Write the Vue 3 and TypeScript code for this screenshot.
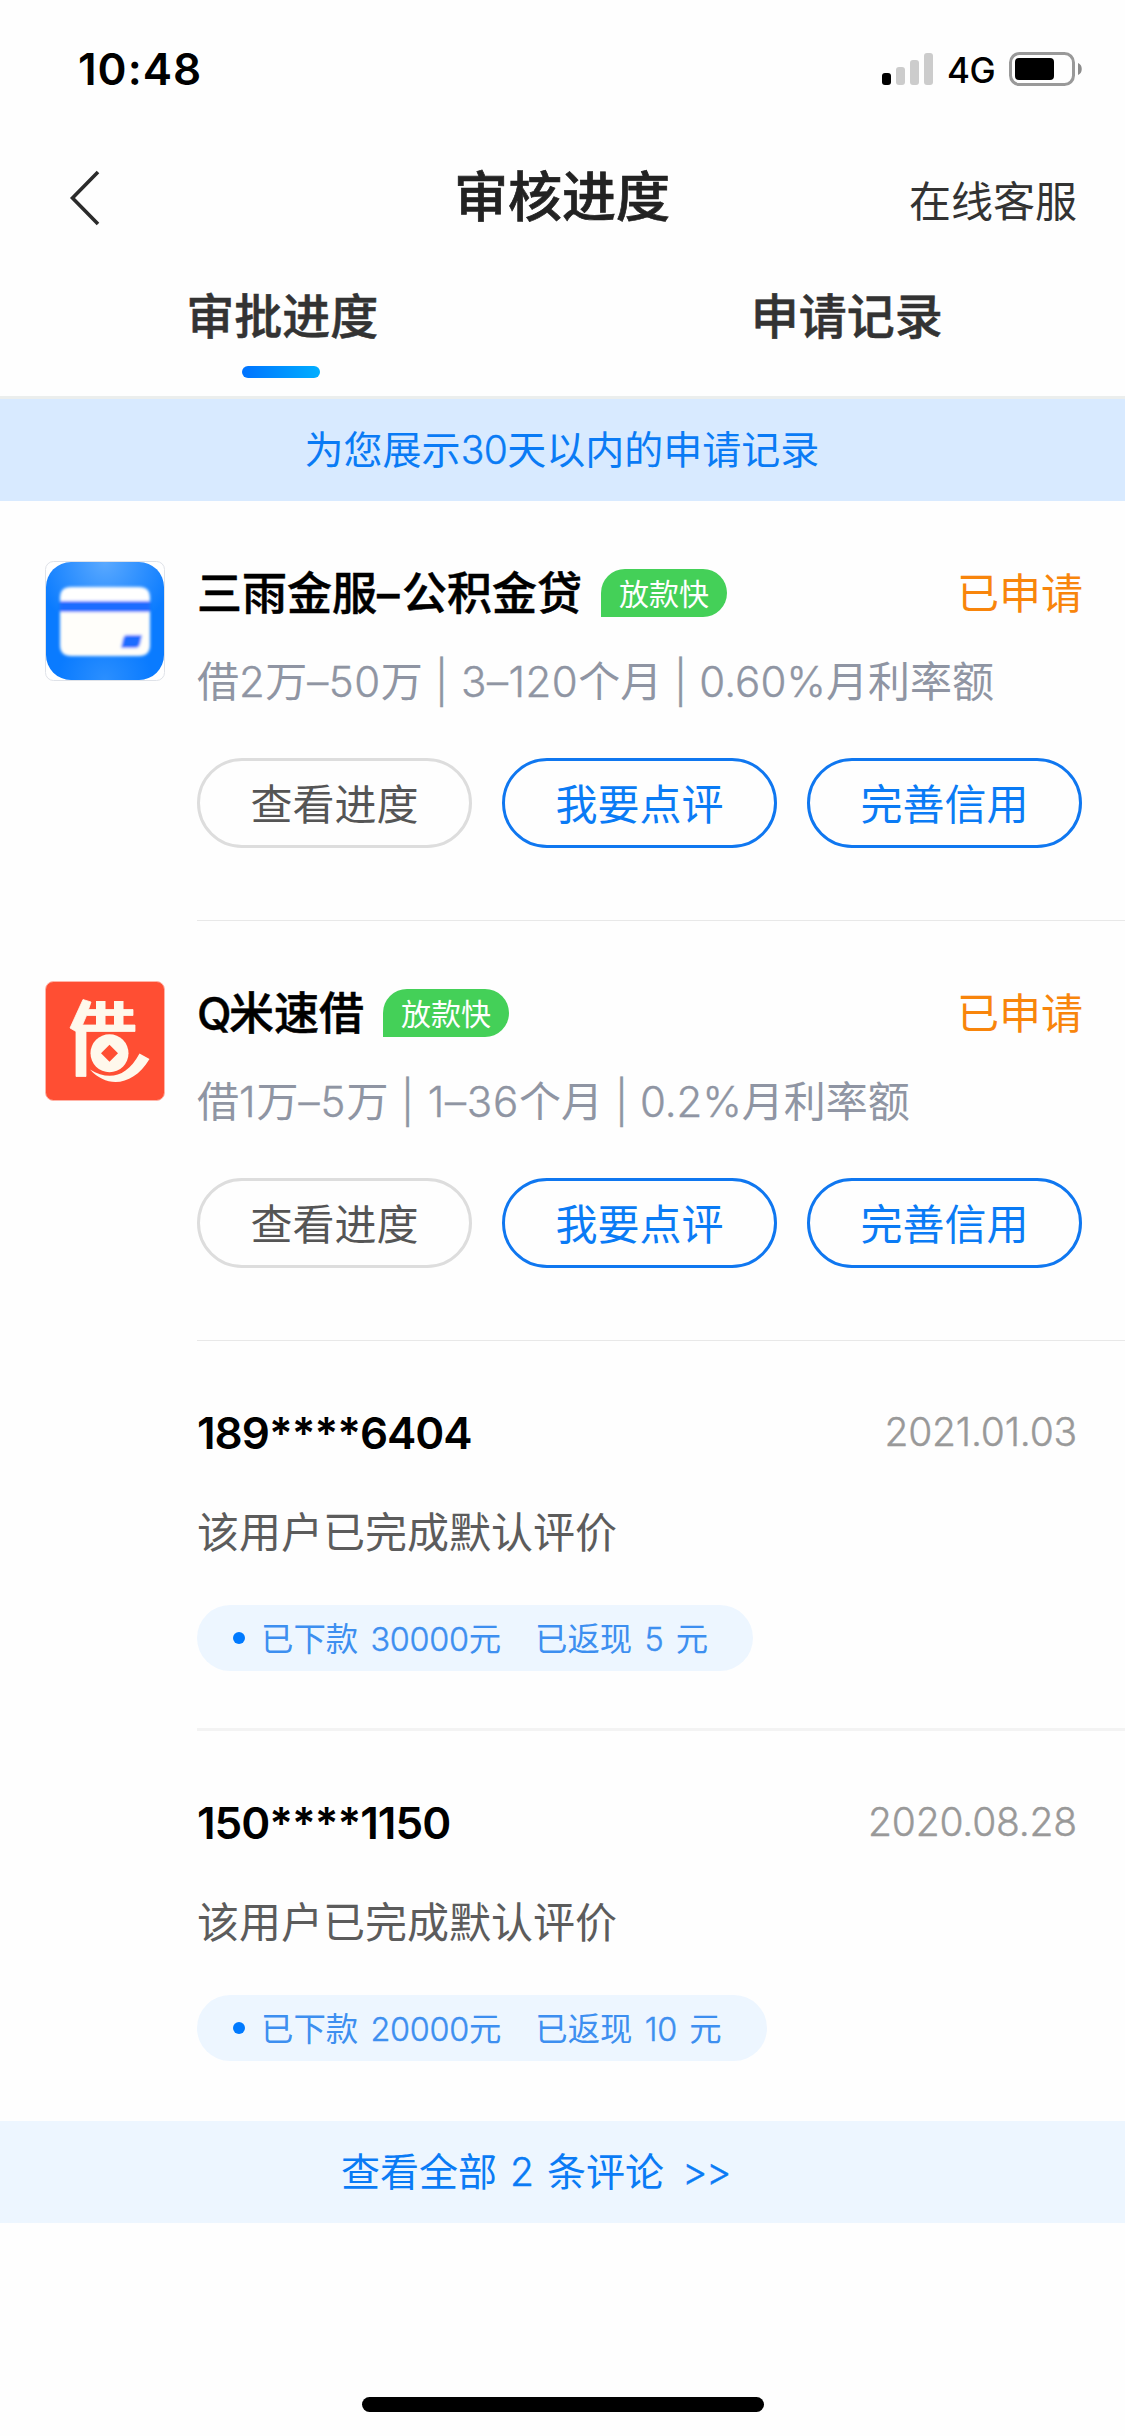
<script setup lang="ts">
interface Part {
  text: string
  num?: boolean
  spacing?: number
}

interface Product {
  logo: 'card' | 'coin'
  name: Part[]
  tag: string
  status: string
  terms: Part[]
}

interface Comment {
  phone: string
  date: string
  text: string
  loan: string
  cashback: string
}

const cn = (text: string): Part => ({ text })
const num = (text: string, spacing?: number): Part => ({ text, num: true, spacing })

const products: Product[] = [
  {
    logo: 'card',
    name: [cn('三雨金服'), num('–', 2.5), cn('公积金贷')],
    tag: '放款快',
    status: '已申请',
    terms: [
      cn('借'), num('2'), cn('万'), num('–50'), cn('万'), num(' | 3–120'),
      cn('个月'), num(' | 0.60%', 0.1), cn('月利率额'),
    ],
  },
  {
    logo: 'coin',
    name: [num('Q', -2.5), cn('米速借')],
    tag: '放款快',
    status: '已申请',
    terms: [
      cn('借'), num('1', 1), cn('万'), num('–5', 1), cn('万'), num(' | 1–36', 0.8),
      cn('个月'), num(' | 0.2%', 0), cn('月利率额'),
    ],
  },
]

const comments: Comment[] = [
  { phone: '189****6404', date: '2021.01.03', text: '该用户已完成默认评价', loan: '30000', cashback: '5' },
  { phone: '150****1150', date: '2020.08.28', text: '该用户已完成默认评价', loan: '20000', cashback: '10' },
]

const signalHeights = [12, 18, 25, 32]

const spacingOf = (s: Part) => (s.spacing === undefined ? undefined : { letterSpacing: s.spacing + 'px' })
</script>

<template>
  <div class="screen">
    <div class="status-bar">
      <span class="clock">10:48</span>
      <div class="indicators">
        <div class="signal">
          <i v-for="(h, i) in signalHeights" :key="h" :class="{ on: i === 0 }" :style="{ height: h + 'px' }"></i>
        </div>
        <span class="network">4G</span>
        <svg class="battery" width="74" height="34" viewBox="0 0 74 34">
          <rect x="1.5" y="1.5" width="63" height="31" rx="9" fill="none" stroke="#999" stroke-width="3" />
          <rect x="6" y="6" width="39" height="22" rx="4" fill="#000" />
          <path d="M69 11c5 1.5 5 10.500 0 12z" fill="#8c8c8c" />
        </svg>
      </div>
    </div>

    <header class="nav">
      <svg class="back" width="32" height="56" viewBox="0 0 32 56">
        <path d="M29 2 3.500 28 29 54" fill="none" stroke="#2b2b2b" stroke-width="3.600" />
      </svg>
      <h1>审核进度</h1>
      <a class="service">在线客服</a>
    </header>

    <nav class="tabs">
      <div class="tab active"><span>审批进度</span></div>
      <div class="tab"><span>申请记录</span></div>
    </nav>

    <div class="notice"><span>为您展示<b class="n">30</b>天以内的申请记录</span></div>

    <section v-for="p in products" :key="p.logo" class="product">
      <svg v-if="p.logo === 'card'" class="logo" width="120" height="120" viewBox="0 0 120 120">
        <defs>
          <radialGradient id="cardGlow" cx="0.5" cy="0" r="0.6">
            <stop offset="0" stop-color="#5aa9ff" />
            <stop offset="1" stop-color="#0a7bff" />
          </radialGradient>
          <radialGradient id="cardFoot" cx="0.5" cy="1" r="0.4">
            <stop offset="0" stop-color="#2b8fff" />
            <stop offset="1" stop-color="#2b8fff" stop-opacity="0" />
          </radialGradient>
          <filter id="soft"><feGaussianBlur stdDeviation="1.5" /></filter>
        </defs>
        <rect x="0.500" y="0.500" width="119" height="119" rx="8" fill="#fff" stroke="#dfe2e8" />
        <rect x="1" y="1" width="118" height="118" rx="25" fill="url(#cardGlow)" />
        <rect x="1" y="1" width="118" height="118" rx="25" fill="url(#cardFoot)" />
        <g filter="url(#soft)">
          <path d="M15 40v-3q0-11 11-11h68q11 0 11 11v3z" fill="#fff" />
          <path d="M15 40h90v11h-90z" fill="#1b6cff" />
          <path d="M15 51h90v33q0 11-11 11h-68q-11 0-11-11z" fill="#fffefa" />
          <path d="M82 74h15l-2 9q-1 4-5 4h-14l2-9q1-4 4-4z" fill="#1b6cff" />
        </g>
      </svg>
      <svg v-else class="logo" width="120" height="120" viewBox="0 0 120 120">
        <rect x="0.500" y="0.500" width="119" height="119" rx="8" fill="#ff4e33" stroke="#ffb4a8" />
        <g fill="#fff8ec">
          <path d="M38 18.500 46 21 43.500 28.500H88V34.500H41.500L37.500 44H90V50.500H41V95.500H31V50.500L25 47Z" stroke="#fff8ec" stroke-width="0.800" stroke-linejoin="round" />
          <rect x="51" y="20" width="9.500" height="26" />
          <rect x="69" y="20" width="9.500" height="26" />
          <circle cx="64.500" cy="72.200" r="19" />
          <path d="M45 88.500C63 99.500 81 97.500 94.500 72.500L104.500 78C88 105.500 62 107.500 45 88.500Z" />
        </g>
        <path d="M64.500 63.700 73 72.200 64.500 80.700 56 72.200Z" fill="#ff4e33" />
      </svg>

      <div class="product-body">
        <div class="product-head">
          <h2><span v-for="(s, i) in p.name" :key="i" :class="{ n: s.num }" :style="spacingOf(s)">{{ s.text }}</span></h2>
          <span class="tag">{{ p.tag }}</span>
          <span class="state">{{ p.status }}</span>
        </div>
        <p class="terms"><span v-for="(s, i) in p.terms" :key="i" :class="{ n: s.num }" :style="spacingOf(s)">{{ s.text }}</span></p>
        <div class="actions">
          <button class="plain">查看进度</button>
          <button>我要点评</button>
          <button>完善信用</button>
        </div>
      </div>
    </section>

    <section v-for="c in comments" :key="c.phone" class="comment">
      <div class="comment-head">
        <span class="phone">{{ c.phone }}</span>
        <span class="date">{{ c.date }}</span>
      </div>
      <p class="comment-text">{{ c.text }}</p>
      <div class="pill">
        <i></i>
        <span>已下款<b class="n">{{ ' ' + c.loan }}</b>元</span>
        <span>已返现<b class="n">{{ ' ' + c.cashback + ' ' }}</b>元</span>
      </div>
    </section>

    <div class="more"><span>查看全部<b class="n"> 2 </b>条评论<b class="n arrows">&gt;&gt;</b></span></div>
    <div class="home-bar"></div>
  </div>
</template>

<style>
body {
  background: #fff;
}
</style>

<style scoped>
* {
  box-sizing: border-box;
  margin: 0;
  padding: 0;
}

.screen {
  display: flex;
  flex-direction: column;
  width: 1125px;
  height: 2436px;
  overflow: hidden;
  background: #fefefe;
  font-family: 'Noto Sans CJK SC', sans-serif;
  font-weight: 400;
}

.n {
  font-family: Inter, sans-serif;
  font-weight: 300;
  white-space: pre;
  -webkit-text-stroke: 0.4px currentColor;
}

.status-bar {
  display: flex;
  justify-content: space-between;
  height: 138px;
  padding: 0 42px 0 78px;
  font-family: Inter, sans-serif;
  color: #000;
}

.clock {
  margin-top: 42px;
  font-size: 44px;
  line-height: 54px;
  font-weight: 600;
  letter-spacing: 1px;
}

.indicators {
  display: flex;
  align-items: flex-start;
}

.signal {
  display: flex;
  align-items: flex-end;
  gap: 5px;
  height: 32px;
  margin: 53px 14px 0 0;
}

.signal i {
  width: 9px;
  border-radius: 3px;
  background: #ccc;
}

.signal i.on {
  background: #000;
}

.network {
  width: 62px;
  margin-top: 49px;
  font-size: 35px;
  line-height: 43px;
  font-weight: 500;
  letter-spacing: -0.5px;
}

.battery {
  margin-top: 52px;
}

.nav {
  display: grid;
  grid-template-columns: 1fr auto 1fr;
  align-items: center;
  height: 120px;
  padding: 0 48px 0 69px;
}

.nav h1 {
  margin: -8px 22px 0 0;
  font-size: 54px;
  line-height: 60px;
  font-weight: 500;
  color: #222;
  -webkit-text-stroke: 0.7px #222;
}

.service {
  justify-self: end;
  margin-top: 1px;
  font-size: 42px;
  line-height: 50px;
  color: #333;
}

.tabs {
  display: flex;
  height: 141px;
  border-bottom: 3px solid #ebeeed;
}

.tab {
  display: flex;
  flex: none;
  flex-direction: column;
  align-items: center;
  width: 50%;
  padding-top: 25px;
  font-size: 48px;
  line-height: 60px;
  font-weight: 500;
  color: #333;
  -webkit-text-stroke: 0.5px #333;
}

.tab span {
  margin-left: 2px;
}

.tab + .tab {
  padding-left: 4px;
}

.tab.active::after {
  content: '';
  width: 78px;
  height: 12px;
  margin-top: 23px;
  border-radius: 6px;
  background: linear-gradient(90deg, #0073ff, #00aeff);
}

.notice {
  display: flex;
  align-items: center;
  justify-content: center;
  height: 102px;
  padding: 0 1px 3px 0;
  background: #d8eaff;
  color: #0a7bf5;
  font-size: 39px;
  line-height: 50px;
}

.notice .n {
  letter-spacing: -0.5px;
}

.product {
  display: flex;
  gap: 32px;
  height: 420px;
  padding: 60px 0 0 45px;
}

.logo {
  flex: none;
}

.product-body {
  display: flex;
  flex: 1;
  flex-direction: column;
  border-bottom: 1px solid #e8e8e8;
}

.product-head {
  display: flex;
  align-items: center;
  height: 64px;
  padding-right: 42px;
}

.product-head h2 {
  margin-top: -2px;
  font-size: 45px;
  line-height: 64px;
  font-weight: 500;
  color: #000;
  -webkit-text-stroke: 0.5px #000;
}

.product-head .n {
  font-weight: 500;
}

.tag {
  height: 48px;
  margin-left: 19px;
  padding: 0 18px;
  border-radius: 24px 24px 24px 0;
  background: #44d058;
  color: #fff;
  font-size: 30px;
  line-height: 46px;
}

.state {
  margin: -4px 0 0 auto;
  color: #f8850b;
  font-size: 42px;
  line-height: 60px;
}

.terms {
  margin-top: 22px;
  color: #8f95a3;
  font-size: 42px;
  line-height: 64px;
  white-space: nowrap;
}

.terms .n {
  letter-spacing: 0.5px;
}

.actions {
  display: flex;
  gap: 30px;
  margin-top: 44px;
}

.actions button {
  width: 275px;
  height: 90px;
  padding-bottom: 2px;
  border: 3px solid #0f77f0;
  border-radius: 45px;
  background: transparent;
  color: #0a7bf5;
  font: inherit;
  font-size: 42px;
  line-height: 80px;
}

.actions button.plain {
  border-color: #ddd;
  color: #555;
}

.comment {
  display: flex;
  flex-direction: column;
  align-items: stretch;
  height: 387px;
  margin-left: 197px;
  padding-top: 62px;
}

.comment + .comment {
  height: 393px;
  border-top: 3px solid #f3f3f3;
}

.comment-head {
  display: flex;
  align-items: center;
  justify-content: space-between;
  height: 60px;
  padding-right: 48px;
  font-family: Inter, sans-serif;
}

.phone {
  color: #000;
  font-size: 44px;
  font-weight: 600;
  letter-spacing: -1px;
}

.date {
  margin-top: -3px;
  color: #999;
  font-size: 39px;
  font-weight: 300;
  letter-spacing: -0.2px;
  -webkit-text-stroke: 0.4px #999;
}

.comment-text {
  margin-top: 35px;
  color: #5c5c5c;
  font-size: 42px;
  line-height: 64px;
}

.pill {
  display: flex;
  align-items: center;
  align-self: flex-start;
  height: 66px;
  margin-top: 43px;
  padding: 0 45px 0 36px;
  border-radius: 33px;
  background: #edf6ff;
  color: #3d8ff0;
  font-size: 32.4px;
  line-height: 60px;
}

.pill .n {
  letter-spacing: -0.3px;
  word-spacing: 3.5px;
}

.pill i {
  width: 12px;
  height: 12px;
  margin-right: 16px;
  border-radius: 50%;
  background: #007aff;
}

.pill span + span {
  margin-left: 34px;
}

.more {
  display: flex;
  align-items: center;
  height: 102px;
  padding: 0 0 3px 341px;
  background: #edf6ff;
  color: #0a7bf5;
  font-size: 39px;
  line-height: 50px;
}

.more .n {
  word-spacing: 2px;
}

.more .arrows {
  margin-left: 18px;
  letter-spacing: -1.5px;
}

.home-bar {
  width: 402px;
  height: 15px;
  margin: auto auto 24px;
  border-radius: 8px;
  background: #000;
}
</style>
